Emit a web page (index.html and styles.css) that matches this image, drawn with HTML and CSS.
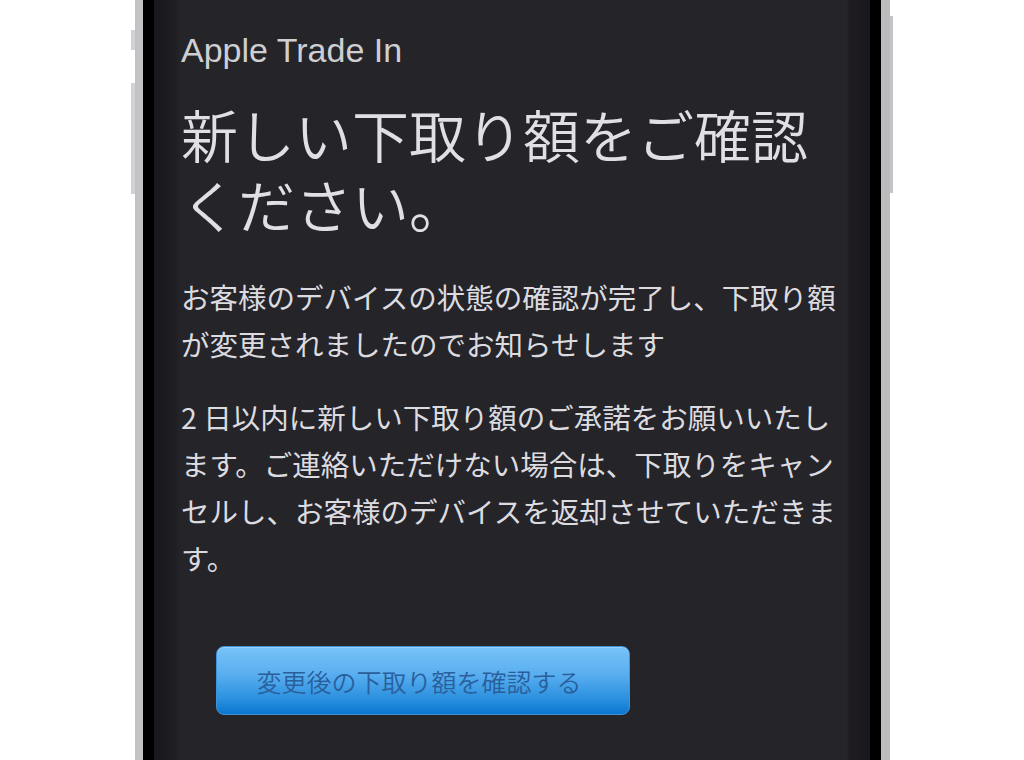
FILE: index.html
```html
<!DOCTYPE html>
<html lang="ja">
<head>
    <meta charset="UTF-8">
    <meta name="viewport" content="width=device-width, initial-scale=1.0">
    <title>Apple Trade In</title>
    <link rel="stylesheet" href="styles.css">
</head>
<body>
    <div class="phone">
        <div class="side-btn mute"></div>
        <div class="side-btn volume"></div>
        <div class="side-btn power"></div>

        <div class="bezel">
            <div class="screen">
                <div class="brand">Apple Trade In</div>
                <h1 class="title">新しい下取り額をご確認ください。</h1>
                <p class="copy">お客様のデバイスの状態の確認が完了し、下取り額が変更されましたのでお知らせします</p>
                <p class="copy">2 日以内に新しい下取り額のご承諾をお願いいたします。ご連絡いただけない場合は、下取りをキャンセルし、お客様のデバイスを返却させていただきます。</p>
                <a class="confirm-btn" href="#">変更後の下取り額を確認する</a>
            </div>
        </div>
    </div>
</body>
</html>
```

FILE: styles.css
```css
body {
    margin: 0;
    padding: 0;
    background: #fff;
    overflow: hidden;
    font-family: "Noto Sans CJK JP", sans-serif;
}

.phone {
    position: relative;
    display: flex;
    box-sizing: border-box;
    margin-left: 135px;
    width: 755px;
    height: 760px;
    border-left: 8px solid #c3c3c5;
    border-right: 9px solid #bcbcbe;
    box-shadow: inset 2px 0 0 #9c9c9e, inset -2px 0 0 #a2a2a4;
}

/* hardware buttons sticking out of the frame */
.side-btn {
    position: absolute;
    background: #d2d2d4;
}
.mute { left: -12px; top: 30px; width: 4px; height: 20px; }
.volume { left: -12px; top: 83px; width: 4px; height: 111px; }
.power { right: -12px; top: 16px; width: 3px; height: 177px; background: #c4c4c6; }

.bezel {
    flex: 1;
    display: flex;
    background: #000;
    padding: 0 11px;
}

.screen {
    flex: 1;
    box-sizing: border-box;
    padding: 30px 29px 0 27px;
    background: linear-gradient(90deg, #18171b 0, #1e1d21 20px, #252429 27px, #252429 calc(100% - 23px), #1e1c20 calc(100% - 21px), #1a181c 100%);
    color: #dcdce0;
}

.brand {
    font-family: "Liberation Sans", "Noto Sans CJK JP", sans-serif;
    font-size: 34px;
    line-height: 40px;
    color: #cfcfd3;
}

.title {
    margin: 28px 0 0;
    font-size: 57px;
    line-height: 70px;
    font-weight: 350;
    color: #e0e0e4;
}

.copy {
    margin: 35px 0 0;
    font-size: 28.5px;
    line-height: 47px;
    font-weight: 400;
}
.copy + .copy {
    margin-top: 26px;
}

.confirm-btn {
    display: flex;
    align-items: center;
    justify-content: center;
    box-sizing: border-box;
    width: 414px;
    height: 69px;
    margin: 65px 0 0 35px;
    padding-right: 8px;
    border: 1px solid #3f93d8;
    border-radius: 8px;
    background: linear-gradient(180deg, #78c2f8 0%, #5aaff0 40%, #2a90df 78%, #0a76cf 100%);
    box-shadow: inset 0 1px 0 rgba(255, 255, 255, 0.25);
    color: #2a5f9c;
    font-size: 25px;
    font-weight: 350;
    text-decoration: none;
}
```
